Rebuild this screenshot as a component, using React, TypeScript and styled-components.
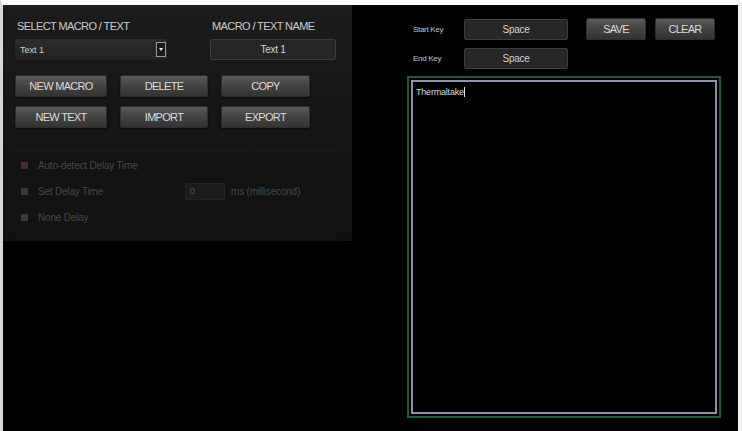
import styled, { createGlobalStyle } from "styled-components";

const Global = createGlobalStyle`
  html, body {
    margin: 0;
    padding: 0;
    background: #000;
  }
  body {
    font-family: "Liberation Sans", Arial, sans-serif;
  }
`;

const Frame = styled.div`
  width: 742px;
  height: 431px;
  box-sizing: border-box;
  border-top: 5px solid #fafafa;
  border-left: 3px solid #d8d8d8;
  border-right: 4px solid #f2f2f2;
  background: #000;
  display: flex;
  gap: 55px;
  overflow: hidden;
`;

const LeftPanel = styled.section`
  width: 349px;
  height: 236px;
  box-sizing: border-box;
  padding: 12px 12px 0 12px;
  background: linear-gradient(180deg, #1c1c1c 0%, #161616 45%, #111 100%);
  display: flex;
  flex-direction: column;
`;

const FieldRow = styled.div`
  display: flex;
  gap: 43px;
`;

const Field = styled.div<{ $w: number }>`
  width: ${p => p.$w}px;
  display: flex;
  flex-direction: column;
  gap: 4px;
`;

const Label = styled.div`
  color: #cccccc;
  font-size: 11px;
  letter-spacing: -0.6px;
  line-height: 18px;
  padding-left: 2px;
  white-space: nowrap;
`;

const Select = styled.div`
  height: 21px;
  box-sizing: border-box;
  background: linear-gradient(180deg, #2c2c2c, #222);
  border-radius: 2px;
  display: flex;
  align-items: center;
  justify-content: space-between;
  padding: 0 1px 0 5px;
  color: #d0d0d0;
  font-size: 9px;
`;

const ArrowBox = styled.span`
  width: 10px;
  height: 15px;
  box-sizing: border-box;
  border: 1px solid #9a9a9a;
  display: flex;
  align-items: center;
  justify-content: center;
  background: #1a1a1a;

  &::after {
    content: "";
    border-left: 2px solid transparent;
    border-right: 2px solid transparent;
    border-top: 3px solid #eee;
  }
`;

const TextBox = styled.div<{ $w?: number }>`
  width: ${p => (p.$w ? `${p.$w}px` : "auto")};
  height: 21px;
  box-sizing: border-box;
  background: #262626;
  border: 1px solid #3e3e3e;
  border-radius: 2px;
  display: flex;
  align-items: center;
  justify-content: center;
  color: #d4d4d4;
  font-size: 10px;
  letter-spacing: -0.3px;
`;

const ButtonGrid = styled.div`
  margin-top: 15px;
  display: grid;
  grid-template-columns: 92px 88px 89px;
  column-gap: 13px;
  row-gap: 9px;
`;

const Button = styled.button<{ $w?: number }>`
  width: ${p => (p.$w ? `${p.$w}px` : "100%")};
  height: 22px;
  padding: 0;
  border: 1px solid #2e2e2e;
  border-radius: 2px;
  background: linear-gradient(180deg, #5a5a5a 0%, #444 45%, #333 100%);
  color: #dcdcdc;
  font-family: "Liberation Sans", Arial, sans-serif;
  font-size: 11px;
  letter-spacing: -0.7px;
  text-transform: uppercase;
  box-shadow: 0 1px 2px rgba(0, 0, 0, 0.7);
`;

const DelayBox = styled.div`
  margin: 23px -2px 0 -5px;
  flex: 1;
  background: #121212;
  border-top: 1px solid #1a1a1a;
  padding: 4px 0 0 11px;
  display: flex;
  flex-direction: column;
  gap: 8px;
`;

const OptionRow = styled.div`
  display: flex;
  align-items: center;
  height: 18px;
`;

const Check = styled.span<{ $on?: boolean }>`
  width: 7px;
  height: 7px;
  background: ${p => (p.$on ? "#4a2a30" : "#3a3a3a")};
  margin-right: 10px;
`;

const OptionText = styled.span<{ $w?: number }>`
  width: ${p => (p.$w ? `${p.$w}px` : "auto")};
  color: #484848;
  font-size: 10px;
  letter-spacing: -0.2px;
  white-space: nowrap;
`;

const DelayInput = styled.span`
  width: 40px;
  height: 17px;
  box-sizing: border-box;
  background: #1c1c1c;
  border: 1px solid #242424;
  color: #555;
  font-size: 9px;
  padding-left: 4px;
  display: flex;
  align-items: center;
  margin-right: 6px;
`;

const RightColumn = styled.section`
  width: 315px;
  padding-top: 13px;
  display: flex;
  flex-direction: column;
`;

const KeyRow = styled.div`
  display: flex;
  align-items: center;
  height: 22px;
  margin-bottom: 7px;
  padding-left: 6px;
`;

const KeyLabel = styled.span`
  width: 51px;
  color: #c4c4c4;
  font-size: 8px;
  letter-spacing: -0.3px;
`;

const KeyButtons = styled.div`
  display: flex;
  gap: 9px;
  margin-left: 18px;
`;

const Editor = styled.div`
  width: 314px;
  height: 342px;
  box-sizing: border-box;
  border: 2px solid #1f5a34;
  padding: 2px;
  background: #000;
`;

const EditorInner = styled.div`
  height: 100%;
  box-sizing: border-box;
  border: 2px solid #8a93a8;
  padding: 5px 3px;
  color: #d8d8d8;
  font-size: 9px;
  letter-spacing: -0.2px;
`;

const Caret = styled.span`
  display: inline-block;
  width: 1px;
  height: 10px;
  background: #ddd;
  vertical-align: -2px;
`;

export default function App() {
  return (
    <>
      <Global />
      <Frame>
        <LeftPanel>
          <FieldRow>
            <Field $w={152}>
              <Label>SELECT MACRO / TEXT</Label>
              <Select>
                <span>Text 1</span>
                <ArrowBox />
              </Select>
            </Field>
            <Field $w={126}>
              <Label>MACRO / TEXT NAME</Label>
              <TextBox>Text 1</TextBox>
            </Field>
          </FieldRow>
          <ButtonGrid>
            {["New Macro", "Delete", "Copy", "New Text", "Import", "Export"].map(label => (
              <Button key={label}>{label}</Button>
            ))}
          </ButtonGrid>
          <DelayBox>
            <OptionRow>
              <Check $on />
              <OptionText>Auto-detect Delay Time</OptionText>
            </OptionRow>
            <OptionRow>
              <Check />
              <OptionText $w={147}>Set Delay Time</OptionText>
              <DelayInput>0</DelayInput>
              <OptionText>ms (millisecond)</OptionText>
            </OptionRow>
            <OptionRow>
              <Check />
              <OptionText>None Delay</OptionText>
            </OptionRow>
          </DelayBox>
        </LeftPanel>
        <RightColumn>
          <KeyRow>
            <KeyLabel>Start Key</KeyLabel>
            <TextBox $w={104}>Space</TextBox>
            <KeyButtons>
              <Button $w={60}>Save</Button>
              <Button $w={60}>Clear</Button>
            </KeyButtons>
          </KeyRow>
          <KeyRow>
            <KeyLabel>End Key</KeyLabel>
            <TextBox $w={104}>Space</TextBox>
          </KeyRow>
          <Editor>
            <EditorInner>
              Thermaltake<Caret />
            </EditorInner>
          </Editor>
        </RightColumn>
      </Frame>
    </>
  );
}
